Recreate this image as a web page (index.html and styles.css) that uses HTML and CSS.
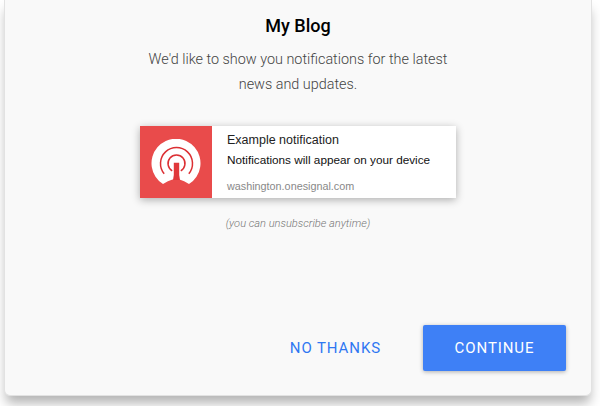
FILE: index.html
```html
<!DOCTYPE html>
<html lang="en">
<head>
<meta charset="utf-8">
<title>My Blog</title>
<link rel="stylesheet" href="styles.css">
</head>
<body>
<div class="dialog">
  <h1 class="title">My Blog</h1>
  <p class="message">We'd like to show you notifications for the latest<br>news and updates.</p>
  <div class="notification">
    <div class="icon">
      <svg class="logo" width="50" height="46" viewBox="0 0 50 46">
        <path d="M12 45 A24.5 24.5 0 1 1 38 45 Q33 41.5 28.5 40.5 L21.5 40.5 Q17 41.5 12 45 Z" fill="#fff"/>
        <path d="M13.2 34.8 A16 16 0 1 1 37.8 34.8" fill="none" stroke="#dc2f33" stroke-width="1.5"/>
        <path d="M21.2 31.8 A8.5 8.5 0 1 1 29.8 31.8" fill="none" stroke="#dc2f33" stroke-width="1.5"/>
        <path d="M22.8 23.7 H28.2 V36 L29 41 H22 L22.8 36 Z" fill="#e0383b"/>
      </svg>
    </div>
    <div class="body">
      <div class="heading">Example notification</div>
      <div class="text">Notifications will appear on your device</div>
      <div class="domain">washington.onesignal.com</div>
    </div>
  </div>
  <p class="hint">(you can unsubscribe anytime)</p>
  <div class="actions">
    <button class="btn btn-text">NO THANKS</button>
    <button class="btn btn-primary">CONTINUE</button>
  </div>
</div>
</body>
</html>
```
FILE: styles.css
```css
html, body {
  margin: 0;
  padding: 0;
}
body {
  width: 600px;
  height: 406px;
  overflow: hidden;
  background: #fff;
  font-family: Roboto, sans-serif;
}
.dialog {
  box-sizing: border-box;
  width: 588px;
  height: 397px;
  margin-top: -1px;
  margin-left: 4px;
  padding-top: 16px;
  background: #f9f9f9;
  border: 1px solid #e2e2e2;
  border-top: 0;
  border-radius: 0 0 6px 6px;
  box-shadow: 0 9px 12px -2px rgba(0, 0, 0, 0.3);
  display: flex;
  flex-direction: column;
  align-items: center;
}
.title {
  margin: 0;
  font-size: 18px;
  line-height: 21px;
  font-weight: 500;
  color: #000;
}
.message {
  margin: 11px 0 0;
  font-size: 14.4px;
  font-weight: 300;
  line-height: 25px;
  color: #444;
  text-align: center;
}
.notification {
  display: flex;
  width: 316px;
  height: 72px;
  margin-top: 29px;
  background: #fff;
  box-shadow: 0 2px 8px rgba(0, 0, 0, 0.3);
}
.icon {
  width: 72px;
  flex: none;
  background: #e94b4b;
  display: flex;
  align-items: center;
  justify-content: center;
}
.logo {
  display: block;
}
.body {
  padding: 7px 0 0 15px;
  font-family: "Liberation Sans", sans-serif;
}
.heading {
  font-size: 12.5px;
  line-height: 15px;
  color: #222;
}
.text {
  margin-top: 5px;
  font-size: 11.75px;
  line-height: 14px;
  color: #111;
}
.domain {
  margin-top: 12px;
  font-size: 10.8px;
  line-height: 14px;
  color: #888;
}
.hint {
  margin: 19px 0 0;
  font-size: 11.1px;
  font-style: italic;
  font-weight: 300;
  line-height: 14px;
  color: #777;
}
.actions {
  align-self: stretch;
  display: flex;
  justify-content: flex-end;
  align-items: center;
  gap: 42px;
  margin-top: 94px;
  padding-right: 25px;
}
.btn {
  border: 0;
  padding: 0;
  font-family: Roboto, sans-serif;
  font-size: 15px;
  font-weight: 400;
  letter-spacing: 0.9px;
}
.btn-text {
  background: none;
  color: #2f77f2;
}
.btn-primary {
  width: 143px;
  height: 46px;
  border-radius: 2px;
  background: #3e80f6;
  color: #fff;
  box-shadow: 0 1px 4px rgba(0, 0, 0, 0.3);
}
```
